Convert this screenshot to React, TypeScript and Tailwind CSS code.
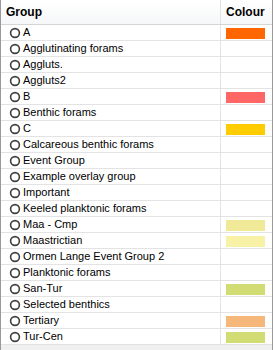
import React from "react";

type Group = { name: string; colour?: string };

const GROUPS: Group[] = [
  { name: "A", colour: "#ff6600" },
  { name: "Agglutinating forams" },
  { name: "Aggluts." },
  { name: "Aggluts2" },
  { name: "B", colour: "#ff6666" },
  { name: "Benthic forams" },
  { name: "C", colour: "#ffcc00" },
  { name: "Calcareous benthic forams" },
  { name: "Event Group" },
  { name: "Example overlay group" },
  { name: "Important" },
  { name: "Keeled planktonic forams" },
  { name: "Maa - Cmp", colour: "#f0ea98" },
  { name: "Maastrictian", colour: "#f8f2a6" },
  { name: "Ormen Lange Event Group 2" },
  { name: "Planktonic forams" },
  { name: "San-Tur", colour: "#d2dc74" },
  { name: "Selected benthics" },
  { name: "Tertiary", colour: "#f6b87a" },
  { name: "Tur-Cen", colour: "#d2dc74" },
];

function Radio() {
  return (
    <svg width="12" height="12" viewBox="0 0 12 12" className="shrink-0">
      <circle cx="6" cy="6" r="4.4" fill="white" stroke="#404040" strokeWidth="1.6" />
    </svg>
  );
}

export default function App() {
  return (
    <div
      className="flex h-[350px] w-[273px] flex-col overflow-hidden border-x border-[#9a9a9a] bg-[#f0f0f0] text-[11px] text-black"
      style={{ fontFamily: '"Liberation Sans", Arial, sans-serif' }}
    >
      {/* header */}
      <div className="grid h-[25px] shrink-0 grid-cols-[220px_1fr] border-b border-[#d5d5d5] bg-gradient-to-b from-white to-[#f6f7f8] text-[12px]">
        <div className="flex items-center border-r border-[#e3e3e3] pl-[5px] font-bold">Group</div>
        <div className="flex items-center pl-[5px] font-bold">Colour</div>
      </div>

      {/* rows */}
      <div className="flex flex-col bg-white">
        {GROUPS.map((g) => (
          <div key={g.name} className="grid h-[16px] grid-cols-[220px_1fr] border-b border-[#e3e3e3]">
            <div className="flex items-center gap-[2px] overflow-hidden whitespace-nowrap border-r border-[#e3e3e3] pl-[8px]">
              <Radio />
              <span className="leading-none">{g.name}</span>
            </div>
            <div className="flex items-start pl-[5px] pt-[3px]">
              {g.colour && <div className="h-[11px] w-[39px]" style={{ backgroundColor: g.colour }} />}
            </div>
          </div>
        ))}
      </div>
    </div>
  );
}
